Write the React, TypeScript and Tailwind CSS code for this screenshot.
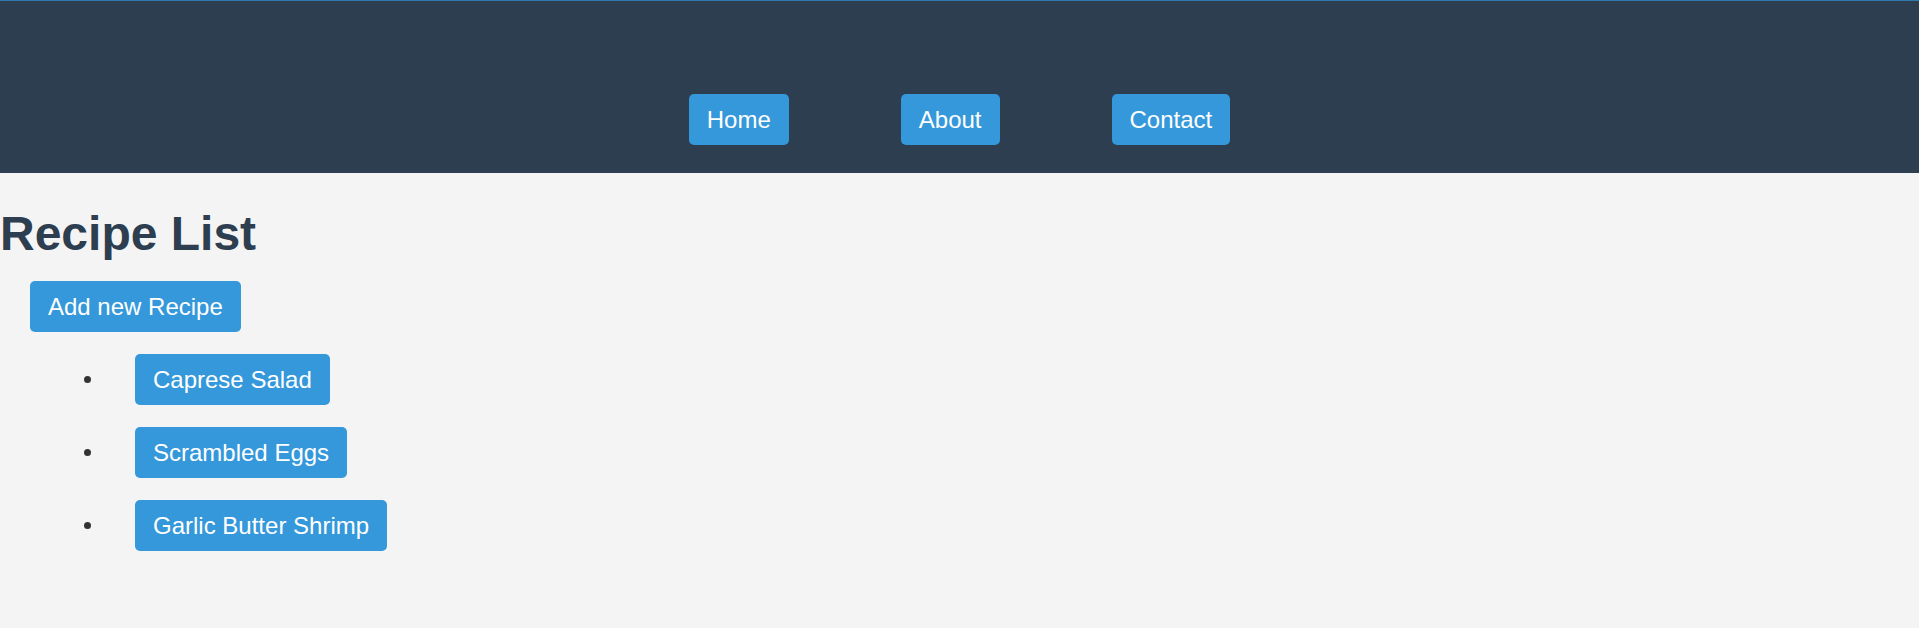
import React from "react"

const NAV = ["Home", "About", "Contact"]
const RECIPES = ["Caprese Salad", "Scrambled Eggs", "Garlic Butter Shrimp"]

function BlueButton({ label }: { label: string }) {
  return (
    <button
      type="button"
      className="h-[51px] px-[18px] rounded-[5px] bg-[#3498db] text-white text-[24px] leading-none whitespace-nowrap"
    >
      {label}
    </button>
  )
}

export default function App() {
  return (
    <div
      className="min-h-screen bg-[#f4f4f4]"
      style={{ fontFamily: '"Liberation Sans", Arial, sans-serif' }}
    >
      {/* Header */}
      <header className="h-[173px] bg-[#2c3e50] border-t border-[#2f7bb0] flex items-end justify-center pb-[28px]">
        <nav className="flex gap-[112px]">
          {NAV.map((n) => (
            <BlueButton key={n} label={n} />
          ))}
        </nav>
      </header>

      {/* Main */}
      <main>
        <h1 className="mt-[33px] text-[48px] leading-[55px] font-bold text-[#2c3e50]">
          Recipe List
        </h1>

        <div className="mt-[20px] pl-[30px]">
          <BlueButton label="Add new Recipe" />
        </div>

        <ul className="mt-[22px] flex flex-col gap-[22px]">
          {RECIPES.map((r) => (
            <li key={r} className="flex items-center">
              <span className="ml-[84px] w-[7px] h-[7px] rounded-full bg-[#333333]" />
              <span className="ml-[44px]">
                <BlueButton label={r} />
              </span>
            </li>
          ))}
        </ul>
      </main>
    </div>
  )
}
